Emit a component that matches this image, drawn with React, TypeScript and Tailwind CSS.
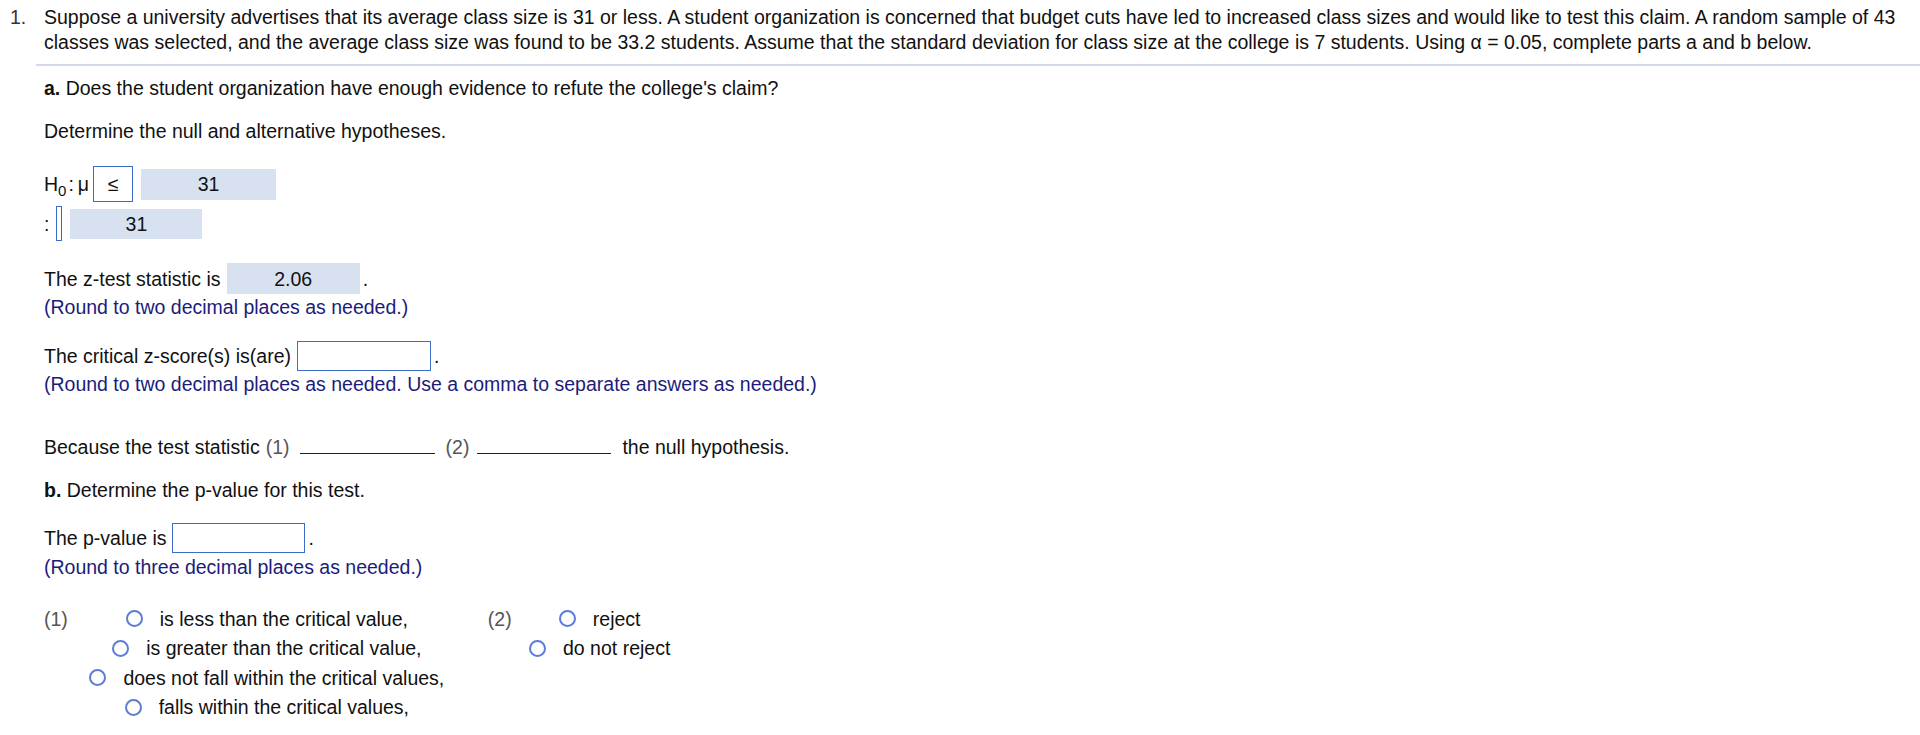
import React from "react";

const Radio = () => (
  <span className="inline-block w-[17px] h-[17px] rounded-full border-2 border-[#5d7bd8] shrink-0" />
);

const OptionRow = ({ label }: { label: string }) => (
  <div className="h-[29.5px] flex items-center whitespace-nowrap">
    <Radio />
    <span className="ml-[17px]">{label}</span>
  </div>
);

const Hint = ({ children, gap }: { children: React.ReactNode; gap: string }) => (
  <div className={gap + " text-[#1c1c7c]"}>{children}</div>
);

const App = () => {
  return (
    <div className="min-h-[735px] w-[1920px] bg-white text-[19.5px] leading-[24px] text-[#111] font-['Liberation_Sans',Arial,sans-serif]">
      {/* question header */}
      <div className="flex pt-[5px]">
        <div className="w-[44px] pl-[10px] text-[#333]">1.</div>
        <div className="whitespace-nowrap leading-[25px]">
          Suppose a university advertises that its average class size is 31 or less. A student organization is concerned that budget cuts have led to increased class sizes and would like to test this claim. A random sample of 43
          <br />
          classes was selected, and the average class size was found to be 33.2 students. Assume that the standard deviation for class size at the college is 7 students. Using α = 0.05, complete parts a and b below.
        </div>
      </div>
      <div className="ml-[36px] mt-[9px] h-[2px] bg-[#d4dae8]" />

      <div className="pl-[44px]">
        <div className="mt-[10px]">
          <span className="font-bold">a.</span> Does the student organization have enough evidence to refute the college's claim?
        </div>
        <div className="mt-[19px]">Determine the null and alternative hypotheses.</div>

        {/* H0 row */}
        <div className="mt-[23px] h-[36px] flex items-center">
          <span>
            H<sub className="text-[15px] relative top-[5px] align-baseline">0</sub>
          </span>
          <span className="ml-[2px]">:</span>
          <span className="ml-[4px]">μ</span>
          <div className="ml-[4px] w-[40px] h-[36px] border border-[#3b6cc6] flex items-center justify-center">≤</div>
          <div className="ml-[8px] w-[135px] h-[31px] bg-[#d8e1f0] flex items-center justify-center">31</div>
        </div>

        {/* H1 row */}
        <div className="mt-[4px] h-[35px] flex items-center">
          <span>:</span>
          <div className="ml-[7px] w-[6px] h-[35px] border border-[#3b6cc6]" />
          <div className="ml-[8px] w-[132px] h-[30px] bg-[#d8e1f0] flex items-center justify-center">31</div>
        </div>

        {/* z-test */}
        <div className="mt-[22px] flex items-baseline">
          <span>The z-test statistic is</span>
          <div className="ml-[6px] w-[133px] h-[31px] bg-[#d8e1f0] flex items-center justify-center">2.06</div>
          <span className="ml-[3px]">.</span>
        </div>
        <Hint gap="mt-[1px]">(Round to two decimal places as needed.)</Hint>

        {/* critical */}
        <div className="mt-[22px] flex items-baseline">
          <span>The critical z-score(s) is(are)</span>
          <div className="ml-[6px] w-[134px] h-[30px] border border-[#3b6cc6] flex items-center justify-center">&nbsp;</div>
          <span className="ml-[3px]">.</span>
        </div>
        <Hint gap="mt-[1px]">(Round to two decimal places as needed. Use a comma to separate answers as needed.)</Hint>

        {/* conclusion sentence */}
        <div className="mt-[39px] flex items-baseline whitespace-nowrap">
          <span>Because the test statistic</span>
          <span className="ml-[6px] text-[#555]">(1)</span>
          <span className="ml-[10px] w-[135px] h-0 border-b border-[#222]" />
          <span className="ml-[11px] text-[#555]">(2)</span>
          <span className="ml-[8px] w-[134px] h-0 border-b border-[#222]" />
          <span className="ml-[11px]">the null hypothesis.</span>
        </div>

        <div className="mt-[19px]">
          <span className="font-bold">b.</span> Determine the p-value for this test.
        </div>

        {/* p-value */}
        <div className="mt-[21px] flex items-baseline">
          <span>The p-value is</span>
          <div className="ml-[6px] w-[133px] h-[30px] border border-[#3b6cc6] flex items-center justify-center">&nbsp;</div>
          <span className="ml-[3px]">.</span>
        </div>
        <Hint gap="mt-[2px]">(Round to three decimal places as needed.)</Hint>

        {/* answer choices */}
        <div className="mt-[25px] flex items-start">
          <div className="h-[29.5px] flex items-center text-[#555]">(1)</div>
          <div className="ml-[20px] w-[358px] flex flex-col items-center">
            <OptionRow label="is less than the critical value," />
            <OptionRow label="is greater than the critical value," />
            <OptionRow label="does not fall within the critical values," />
            <OptionRow label="falls within the critical values," />
          </div>
          <div className="ml-[42px] h-[29.5px] flex items-center text-[#555]">(2)</div>
          <div className="ml-[17px] w-[142px] flex flex-col items-center">
            <OptionRow label="reject" />
            <OptionRow label="do not reject" />
          </div>
        </div>
      </div>
    </div>
  );
};

export default App;
